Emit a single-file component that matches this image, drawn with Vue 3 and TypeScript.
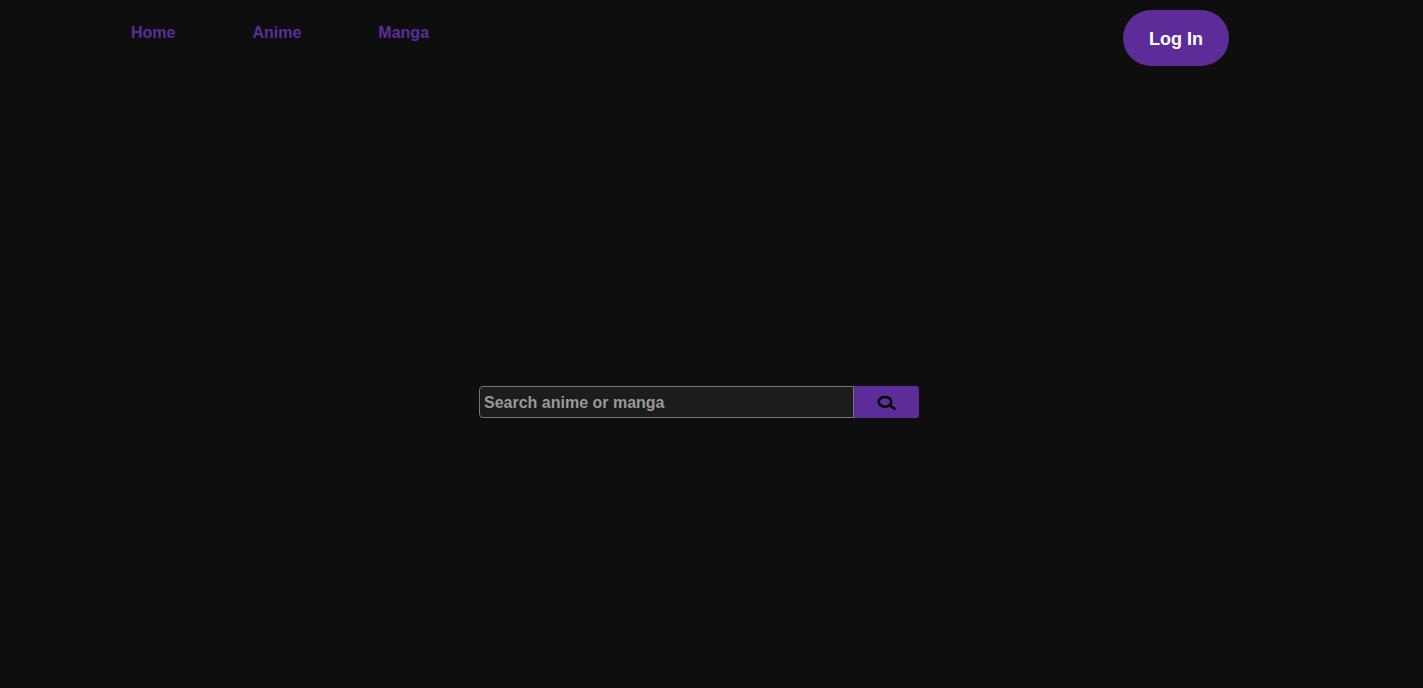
<script setup lang="ts">
import { ref } from 'vue'

interface NavLink {
  label: string
  href: string
}

const links: NavLink[] = [
  { label: 'Home', href: '#home' },
  { label: 'Anime', href: '#anime' },
  { label: 'Manga', href: '#manga' },
]

const query = ref('')
</script>

<template>
  <div class="page">
    <header class="header">
      <nav class="nav" aria-label="Main">
        <a v-for="link in links" :key="link.href" :href="link.href">{{ link.label }}</a>
      </nav>
      <button class="login" type="button">Log In</button>
    </header>
    <main class="main">
      <form class="search" role="search" @submit.prevent>
        <input v-model="query" class="field" type="text" placeholder="Search anime or manga" aria-label="Search anime or manga" />
        <button class="submit" type="submit" aria-label="Search">
          <svg viewBox="0 0 20 16" width="20" height="16" fill="none" stroke="#000" aria-hidden="true">
            <ellipse cx="8" cy="7.8" rx="6.3" ry="4.9" stroke-width="2.5" />
            <path d="M13 11.5 17.6 14.8" stroke-width="2.6" stroke-linecap="round" />
          </svg>
        </button>
      </form>
    </main>
  </div>
</template>

<style>
body {
  margin: 0;
  background: #0e0e0e;
}
</style>

<style scoped>
.page {
  box-sizing: border-box;
  min-height: 100vh;
  display: flex;
  flex-direction: column;
  background: #0e0e0e;
  font-family: "Liberation Sans", Arial, sans-serif;
  font-weight: bold;
}

.header {
  display: flex;
  justify-content: space-between;
  align-items: flex-start;
  padding: 10px 194px 0 131px;
}

.nav {
  display: flex;
  gap: 77px;
  padding-top: 14px;
}

.nav a {
  color: #5c2d99;
  font-size: 16px;
  line-height: 18px;
  text-decoration: none;
}

.login {
  height: 56px;
  padding: 2px 26px 0;
  border: 0;
  border-radius: 28px;
  background: #5c2d99;
  color: #fff;
  font: bold 18px "Liberation Sans", Arial, sans-serif;
  cursor: pointer;
}

.main {
  flex: 1;
  display: flex;
  justify-content: center;
  padding: 320px 25px 0 0;
}

.search {
  display: flex;
  width: 440px;
  height: 32px;
}

.field {
  box-sizing: border-box;
  flex: 1;
  min-width: 0;
  padding: 2px 4px 0;
  border: 1px solid #767676;
  border-radius: 4px 0 0 4px;
  outline: 0;
  background: #1c1c1c;
  color: #999;
  font: bold 16px "Liberation Sans", Arial, sans-serif;
}

.field::placeholder {
  color: #999;
  opacity: 1;
}

.submit {
  display: flex;
  align-items: center;
  justify-content: center;
  width: 65px;
  padding: 0;
  border: 0;
  border-radius: 0 3px 3px 0;
  background: #5c2d99;
  cursor: pointer;
}
</style>
